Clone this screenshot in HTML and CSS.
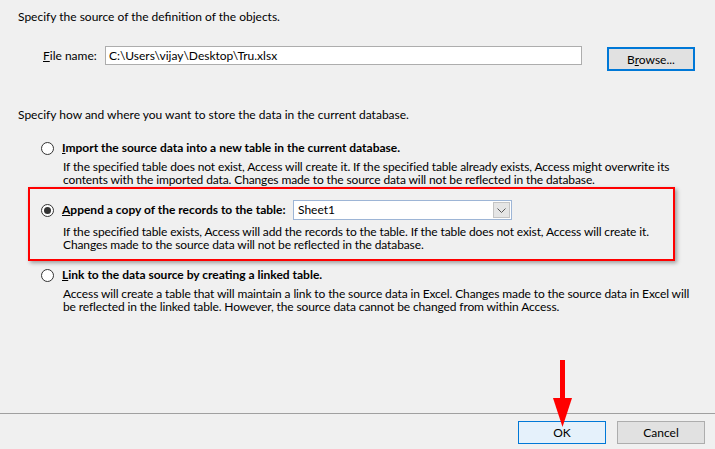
FILE: index.html
```html
<!DOCTYPE html>
<html lang="en">
<head>
    <meta charset="UTF-8">
    <meta name="viewport" content="width=device-width, initial-scale=1.0">
    <title>Get External Data - Excel Spreadsheet</title>
    <link rel="stylesheet" href="styles.css">
</head>
<body>
    <div class="dialog">
        <div class="dialog-content">
            <p class="intro">Specify the source of the definition of the objects.</p>

            <div class="file-row">
                <label class="file-label" for="fileName"><u>F</u>ile name:</label>
                <input class="file-input" type="text" id="fileName" value="C:\Users\vijay\Desktop\Tru.xlsx" readonly>
                <button class="btn btn-browse" type="button">B<u>r</u>owse...</button>
            </div>

            <p class="store">Specify how and where you want to store the data in the current database.</p>

            <div class="options">
                <div class="option option-import">
                    <div class="option-head">
                        <span class="radio"></span>
                        <span class="option-label"><u>I</u>mport the source data into a new table in the current database.</span>
                    </div>
                    <p class="option-desc">If the specified table does not exist, Access will create it. If the specified table already exists, Access might overwrite its<br>contents with the imported data. Changes made to the source data will not be reflected in the database.</p>
                </div>

                <div class="option option-append highlighted">
                    <div class="option-head">
                        <span class="radio checked"></span>
                        <span class="option-label label-fixed"><u>A</u>ppend a copy of the records to the table:</span>
                        <div class="combo">
                            <span class="combo-value">Sheet1</span>
                            <span class="combo-button">
                                <svg width="9" height="5" viewBox="0 0 9 5"><path d="M0.5 0.5 L4.5 4.5 L8.5 0.5" fill="none" stroke="#555" stroke-width="1"/></svg>
                            </span>
                        </div>
                    </div>
                    <p class="option-desc">If the specified table exists, Access will add the records to the table. If the table does not exist, Access will create it.<br>Changes made to the source data will not be reflected in the database.</p>
                </div>

                <div class="option option-link">
                    <div class="option-head">
                        <span class="radio"></span>
                        <span class="option-label"><u>L</u>ink to the data source by creating a linked table.</span>
                    </div>
                    <p class="option-desc">Access will create a table that will maintain a link to the source data in Excel. Changes made to the source data in Excel will<br>be reflected in the linked table. However, the source data cannot be changed from within Access.</p>
                </div>
            </div>
        </div>

        <div class="dialog-footer">
            <button class="btn btn-ok" type="button">OK</button>
            <button class="btn btn-cancel" type="button">Cancel</button>
        </div>

        <!-- annotation arrow pointing at OK -->
        <svg class="arrow" width="20" height="67" viewBox="0 0 20 67">
            <rect x="7" y="0" width="5" height="39" fill="#ff0000"/>
            <polygon points="0,38 19,38 9.5,67" fill="#ff0000"/>
        </svg>
    </div>
</body>
</html>
```

FILE: styles.css
```css
/* Base */
* {
    margin: 0;
    padding: 0;
    box-sizing: border-box;
}

body {
    font-family: Lato, "Noto Sans", sans-serif;
    font-size: 12px;
    color: #000;
    background-color: #f0f0f0;
}

.dialog {
    position: relative;
    width: 715px;
    height: 449px;
    display: flex;
    flex-direction: column;
}

.dialog-content {
    flex: 1;
    padding: 9px 0 0 18px;
}

.intro,
.store {
    line-height: 16px;
}

/* File row */
.file-row {
    display: flex;
    align-items: flex-start;
    margin-top: 21px;
}

.file-label {
    width: 62px;
    margin-left: 25px;
    line-height: 19px;
}

.file-input {
    width: 477px;
    height: 19px;
    padding: 0 3px;
    border: 1px solid #adadad;
    background-color: #fff;
    font-family: inherit;
    font-size: 12px;
    color: #000;
    outline: none;
}

.btn {
    font-family: inherit;
    font-size: 12px;
    color: #000;
    background-color: #e1e1e1;
    border: 1px solid #adadad;
    width: 88px;
    height: 23px;
}

.btn-browse {
    margin-left: 25px;
    margin-top: 1px;
    height: 24px;
    border: 2px solid #0078d7;
}

.store {
    margin-top: 36px;
}

/* Options */
.options {
    margin-top: 17px;
    margin-left: 10px;
    width: 647px;
}

.option {
    padding-left: 13px;
}

.option-head {
    display: flex;
    align-items: center;
    line-height: 16px;
}

.radio {
    width: 13px;
    height: 13px;
    border: 1px solid #333;
    border-radius: 50%;
    background-color: #fff;
    margin-right: 8px;
    display: flex;
    align-items: center;
    justify-content: center;
    flex-shrink: 0;
}

.radio.checked::after {
    content: "";
    width: 7px;
    height: 7px;
    border-radius: 50%;
    background-color: #333;
}

.option-label {
    font-weight: 700;
    white-space: nowrap;
}

.label-fixed {
    width: 231px;
}

.option-desc {
    padding-left: 22px;
    line-height: 13px;
    margin-top: 4px;
    white-space: nowrap;
    letter-spacing: -0.12px;
}

.highlighted {
    border: 2px solid #ff0000;
    box-shadow: 2px 2px 4px rgba(0, 0, 0, 0.35);
    padding: 11px 0 8px 11px;
    margin-top: 1px;
}

.highlighted .option-desc {
    margin-top: 5px;
}

.option-link {
    margin-top: 6px;
}

/* Combo box */
.combo {
    width: 219px;
    height: 20px;
    border: 1px solid #9db5d6;
    background-color: #fff;
    display: flex;
    align-items: center;
    padding: 1px;
}

.combo-value {
    flex: 1;
    padding-left: 3px;
    font-weight: 400;
}

.combo-button {
    width: 17px;
    height: 16px;
    background-color: #e5e5e5;
    border: 1px solid #c4c4c4;
    display: flex;
    align-items: center;
    justify-content: center;
}

/* Footer */
.dialog-footer {
    border-top: 1px solid #a0a0a0;
    padding: 7px 10px 5px 0;
    display: flex;
    justify-content: flex-end;
    gap: 11px;
}

.btn-ok {
    background-color: #e5f1fb;
    border-color: #0078d7;
}

.arrow {
    position: absolute;
    left: 553px;
    top: 360px;
}
```
